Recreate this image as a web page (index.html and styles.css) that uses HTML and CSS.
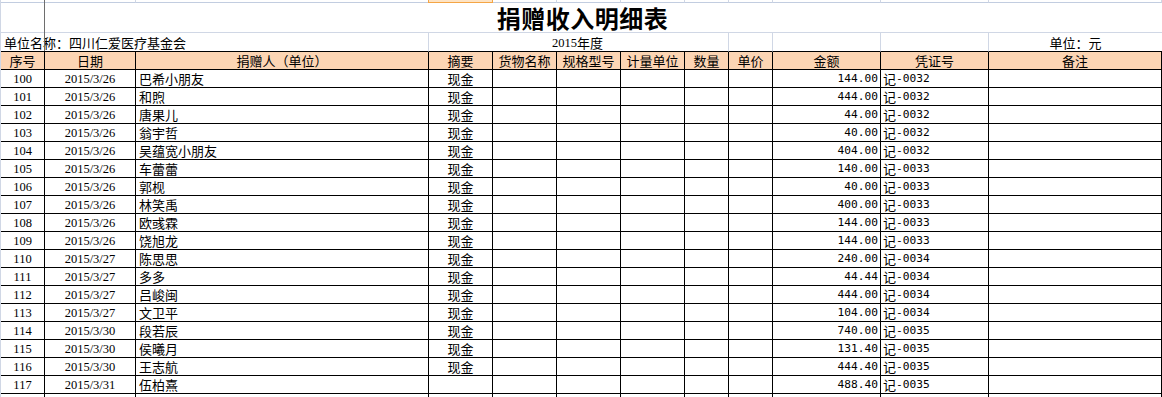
FILE: index.html
```html
<!DOCTYPE html>
<html lang="zh-CN">
<head>
<meta charset="utf-8">
<title>捐赠收入明细表</title>
<link rel="stylesheet" href="styles.css">
</head>
<body>
<div class="sheet">
  <div class="row strip">
    <div class="c"></div><div class="c"></div><div class="c"></div><div class="c sel"></div><div class="c"></div><div class="c"></div><div class="c"></div><div class="c"></div><div class="c"></div><div class="c"></div><div class="c"></div><div class="c"></div>
  </div>
  <div class="row titlerow">
    <div class="c title">捐赠收入明细表</div>
  </div>
  <div class="row inforow">
    <div class="c org">单位名称：四川仁爱医疗基金会</div>
    <div class="c year"><span class="tnr">2015</span>年度</div>
    <div class="c"></div>
    <div class="c"></div>
    <div class="c"></div>
    <div class="c ctr">单位：元</div>
  </div>
  <div class="row head">
    <div class="c ctr">序号</div><div class="c ctr">日期</div><div class="c ctr">捐赠人（单位）</div><div class="c ctr">摘要</div><div class="c ctr">货物名称</div><div class="c ctr">规格型号</div><div class="c ctr">计量单位</div><div class="c ctr">数量</div><div class="c ctr">单价</div><div class="c ctr">金额</div><div class="c ctr">凭证号</div><div class="c ctr">备注</div>
  </div>
  <div class="row"><div class="c n">100</div><div class="c n">2015/3/26</div><div class="c name">巴希小朋友</div><div class="c ctr">现金</div><div class="c"></div><div class="c"></div><div class="c"></div><div class="c"></div><div class="c"></div><div class="c amt">144.00</div><div class="c vch"><span class="ji">记</span>-0032</div><div class="c"></div></div>
  <div class="row"><div class="c n">101</div><div class="c n">2015/3/26</div><div class="c name">和煦</div><div class="c ctr">现金</div><div class="c"></div><div class="c"></div><div class="c"></div><div class="c"></div><div class="c"></div><div class="c amt">444.00</div><div class="c vch"><span class="ji">记</span>-0032</div><div class="c"></div></div>
  <div class="row"><div class="c n">102</div><div class="c n">2015/3/26</div><div class="c name">唐果儿</div><div class="c ctr">现金</div><div class="c"></div><div class="c"></div><div class="c"></div><div class="c"></div><div class="c"></div><div class="c amt">44.00</div><div class="c vch"><span class="ji">记</span>-0032</div><div class="c"></div></div>
  <div class="row"><div class="c n">103</div><div class="c n">2015/3/26</div><div class="c name">翁宇哲</div><div class="c ctr">现金</div><div class="c"></div><div class="c"></div><div class="c"></div><div class="c"></div><div class="c"></div><div class="c amt">40.00</div><div class="c vch"><span class="ji">记</span>-0032</div><div class="c"></div></div>
  <div class="row"><div class="c n">104</div><div class="c n">2015/3/26</div><div class="c name">吴蕴宽小朋友</div><div class="c ctr">现金</div><div class="c"></div><div class="c"></div><div class="c"></div><div class="c"></div><div class="c"></div><div class="c amt">404.00</div><div class="c vch"><span class="ji">记</span>-0032</div><div class="c"></div></div>
  <div class="row"><div class="c n">105</div><div class="c n">2015/3/26</div><div class="c name">车蕾蕾</div><div class="c ctr">现金</div><div class="c"></div><div class="c"></div><div class="c"></div><div class="c"></div><div class="c"></div><div class="c amt">140.00</div><div class="c vch"><span class="ji">记</span>-0033</div><div class="c"></div></div>
  <div class="row"><div class="c n">106</div><div class="c n">2015/3/26</div><div class="c name">郭枧</div><div class="c ctr">现金</div><div class="c"></div><div class="c"></div><div class="c"></div><div class="c"></div><div class="c"></div><div class="c amt">40.00</div><div class="c vch"><span class="ji">记</span>-0033</div><div class="c"></div></div>
  <div class="row"><div class="c n">107</div><div class="c n">2015/3/26</div><div class="c name">林笑禹</div><div class="c ctr">现金</div><div class="c"></div><div class="c"></div><div class="c"></div><div class="c"></div><div class="c"></div><div class="c amt">400.00</div><div class="c vch"><span class="ji">记</span>-0033</div><div class="c"></div></div>
  <div class="row"><div class="c n">108</div><div class="c n">2015/3/26</div><div class="c name">欧彧霖</div><div class="c ctr">现金</div><div class="c"></div><div class="c"></div><div class="c"></div><div class="c"></div><div class="c"></div><div class="c amt">144.00</div><div class="c vch"><span class="ji">记</span>-0033</div><div class="c"></div></div>
  <div class="row"><div class="c n">109</div><div class="c n">2015/3/26</div><div class="c name">饶旭龙</div><div class="c ctr">现金</div><div class="c"></div><div class="c"></div><div class="c"></div><div class="c"></div><div class="c"></div><div class="c amt">144.00</div><div class="c vch"><span class="ji">记</span>-0033</div><div class="c"></div></div>
  <div class="row"><div class="c n">110</div><div class="c n">2015/3/27</div><div class="c name">陈思思</div><div class="c ctr">现金</div><div class="c"></div><div class="c"></div><div class="c"></div><div class="c"></div><div class="c"></div><div class="c amt">240.00</div><div class="c vch"><span class="ji">记</span>-0034</div><div class="c"></div></div>
  <div class="row"><div class="c n">111</div><div class="c n">2015/3/27</div><div class="c name">多多</div><div class="c ctr">现金</div><div class="c"></div><div class="c"></div><div class="c"></div><div class="c"></div><div class="c"></div><div class="c amt">44.44</div><div class="c vch"><span class="ji">记</span>-0034</div><div class="c"></div></div>
  <div class="row"><div class="c n">112</div><div class="c n">2015/3/27</div><div class="c name">吕峻闽</div><div class="c ctr">现金</div><div class="c"></div><div class="c"></div><div class="c"></div><div class="c"></div><div class="c"></div><div class="c amt">444.00</div><div class="c vch"><span class="ji">记</span>-0034</div><div class="c"></div></div>
  <div class="row"><div class="c n">113</div><div class="c n">2015/3/27</div><div class="c name">文卫平</div><div class="c ctr">现金</div><div class="c"></div><div class="c"></div><div class="c"></div><div class="c"></div><div class="c"></div><div class="c amt">104.00</div><div class="c vch"><span class="ji">记</span>-0034</div><div class="c"></div></div>
  <div class="row"><div class="c n">114</div><div class="c n">2015/3/30</div><div class="c name">段若辰</div><div class="c ctr">现金</div><div class="c"></div><div class="c"></div><div class="c"></div><div class="c"></div><div class="c"></div><div class="c amt">740.00</div><div class="c vch"><span class="ji">记</span>-0035</div><div class="c"></div></div>
  <div class="row"><div class="c n">115</div><div class="c n">2015/3/30</div><div class="c name">侯曦月</div><div class="c ctr">现金</div><div class="c"></div><div class="c"></div><div class="c"></div><div class="c"></div><div class="c"></div><div class="c amt">131.40</div><div class="c vch"><span class="ji">记</span>-0035</div><div class="c"></div></div>
  <div class="row"><div class="c n">116</div><div class="c n">2015/3/30</div><div class="c name">王志航</div><div class="c ctr">现金</div><div class="c"></div><div class="c"></div><div class="c"></div><div class="c"></div><div class="c"></div><div class="c amt">444.40</div><div class="c vch"><span class="ji">记</span>-0035</div><div class="c"></div></div>
  <div class="row"><div class="c n">117</div><div class="c n">2015/3/31</div><div class="c name">伍柏熹</div><div class="c ctr"></div><div class="c"></div><div class="c"></div><div class="c"></div><div class="c"></div><div class="c"></div><div class="c amt">488.40</div><div class="c vch"><span class="ji">记</span>-0035</div><div class="c"></div></div>
  <div class="row"><div class="c"></div><div class="c"></div><div class="c"></div><div class="c"></div><div class="c"></div><div class="c"></div><div class="c"></div><div class="c"></div><div class="c"></div><div class="c"></div><div class="c"></div><div class="c"></div></div>
</div>
</body>
</html>
```

FILE: styles.css
```css
html, body {
  margin: 0;
  padding: 0;
  background: #fff;
}

body {
  width: 1162px;
  height: 397px;
  overflow: hidden;
  font-family: "Noto Sans CJK SC", "Noto Sans", sans-serif;
  font-size: 13px;
  color: #000;
}

.sheet {
  position: relative;
  width: 1161px;
  border-left: 1px solid #d0d7e5;
}

.sheet::before {
  content: "";
  position: absolute;
  left: 43px;
  top: 0;
  width: 1px;
  height: 51px;
  background: #6e6e6e;
  z-index: 2;
}

.row {
  display: grid;
  grid-template-columns: 44px 91px 293px 64px 64px 64px 64px 44px 44px 108px 108px 173px;
}

.c {
  box-sizing: border-box;
  height: 18px;
  border-right: 1px solid #000;
  border-bottom: 1px solid #000;
  display: flex;
  align-items: center;
  overflow: hidden;
  white-space: nowrap;
  line-height: 16px;
}

/* top partial row */
.strip .c {
  height: 3px;
  border-right: 1px solid #d0d7e5;
  border-bottom: 1px solid #c2cde0;
}

.strip .c.sel {
  background: #fde3c4;
  border-left: 1px solid #f4a545;
  border-right: 1px solid #f4a545;
  border-bottom: 1px solid #f4a545;
  margin-left: -1px;
}

/* title row */
.titlerow .c.title {
  grid-column: 1 / -1;
  height: 30px;
  border-right: none;
  border-bottom: 1px solid #d0d7e5;
  justify-content: center;
  font-size: 24px;
  font-weight: 700;
  letter-spacing: 0.5px;
  line-height: 28px;
  padding-left: 2px;
  overflow: visible;
}

/* info row */
.inforow .c {
  height: 19px;
  border-right: 1px solid #d0d7e5;
  padding-top: 1px;
}

.inforow .c.org {
  grid-column: 1 / 4;
  padding-left: 3px;
}

.inforow .c.year {
  grid-column: 4 / 9;
  justify-content: center;
  padding-right: 2px;
}

.inforow .c:last-child {
  border-right: none;
}

.tnr {
  font-family: "Liberation Serif", serif;
  font-size: 12.5px;
}

/* header row */
.head .c {
  background: #fcd5b4;
}

.ctr {
  justify-content: center;
}

.n {
  justify-content: center;
  font-family: "Liberation Serif", "Noto Sans CJK SC", serif;
  font-size: 12.5px;
  color: #000;
}

.name {
  padding-left: 3px;
}

.amt {
  justify-content: flex-end;
  padding-right: 2px;
  font-family: "DejaVu Sans Mono", monospace;
  font-size: 11.2px;
}

.vch {
  padding-left: 2px;
  font-family: "DejaVu Sans Mono", monospace;
  font-size: 11.2px;
}

.ji {
  font-family: "Noto Sans CJK SC", sans-serif;
  font-size: 13px;
}
```
